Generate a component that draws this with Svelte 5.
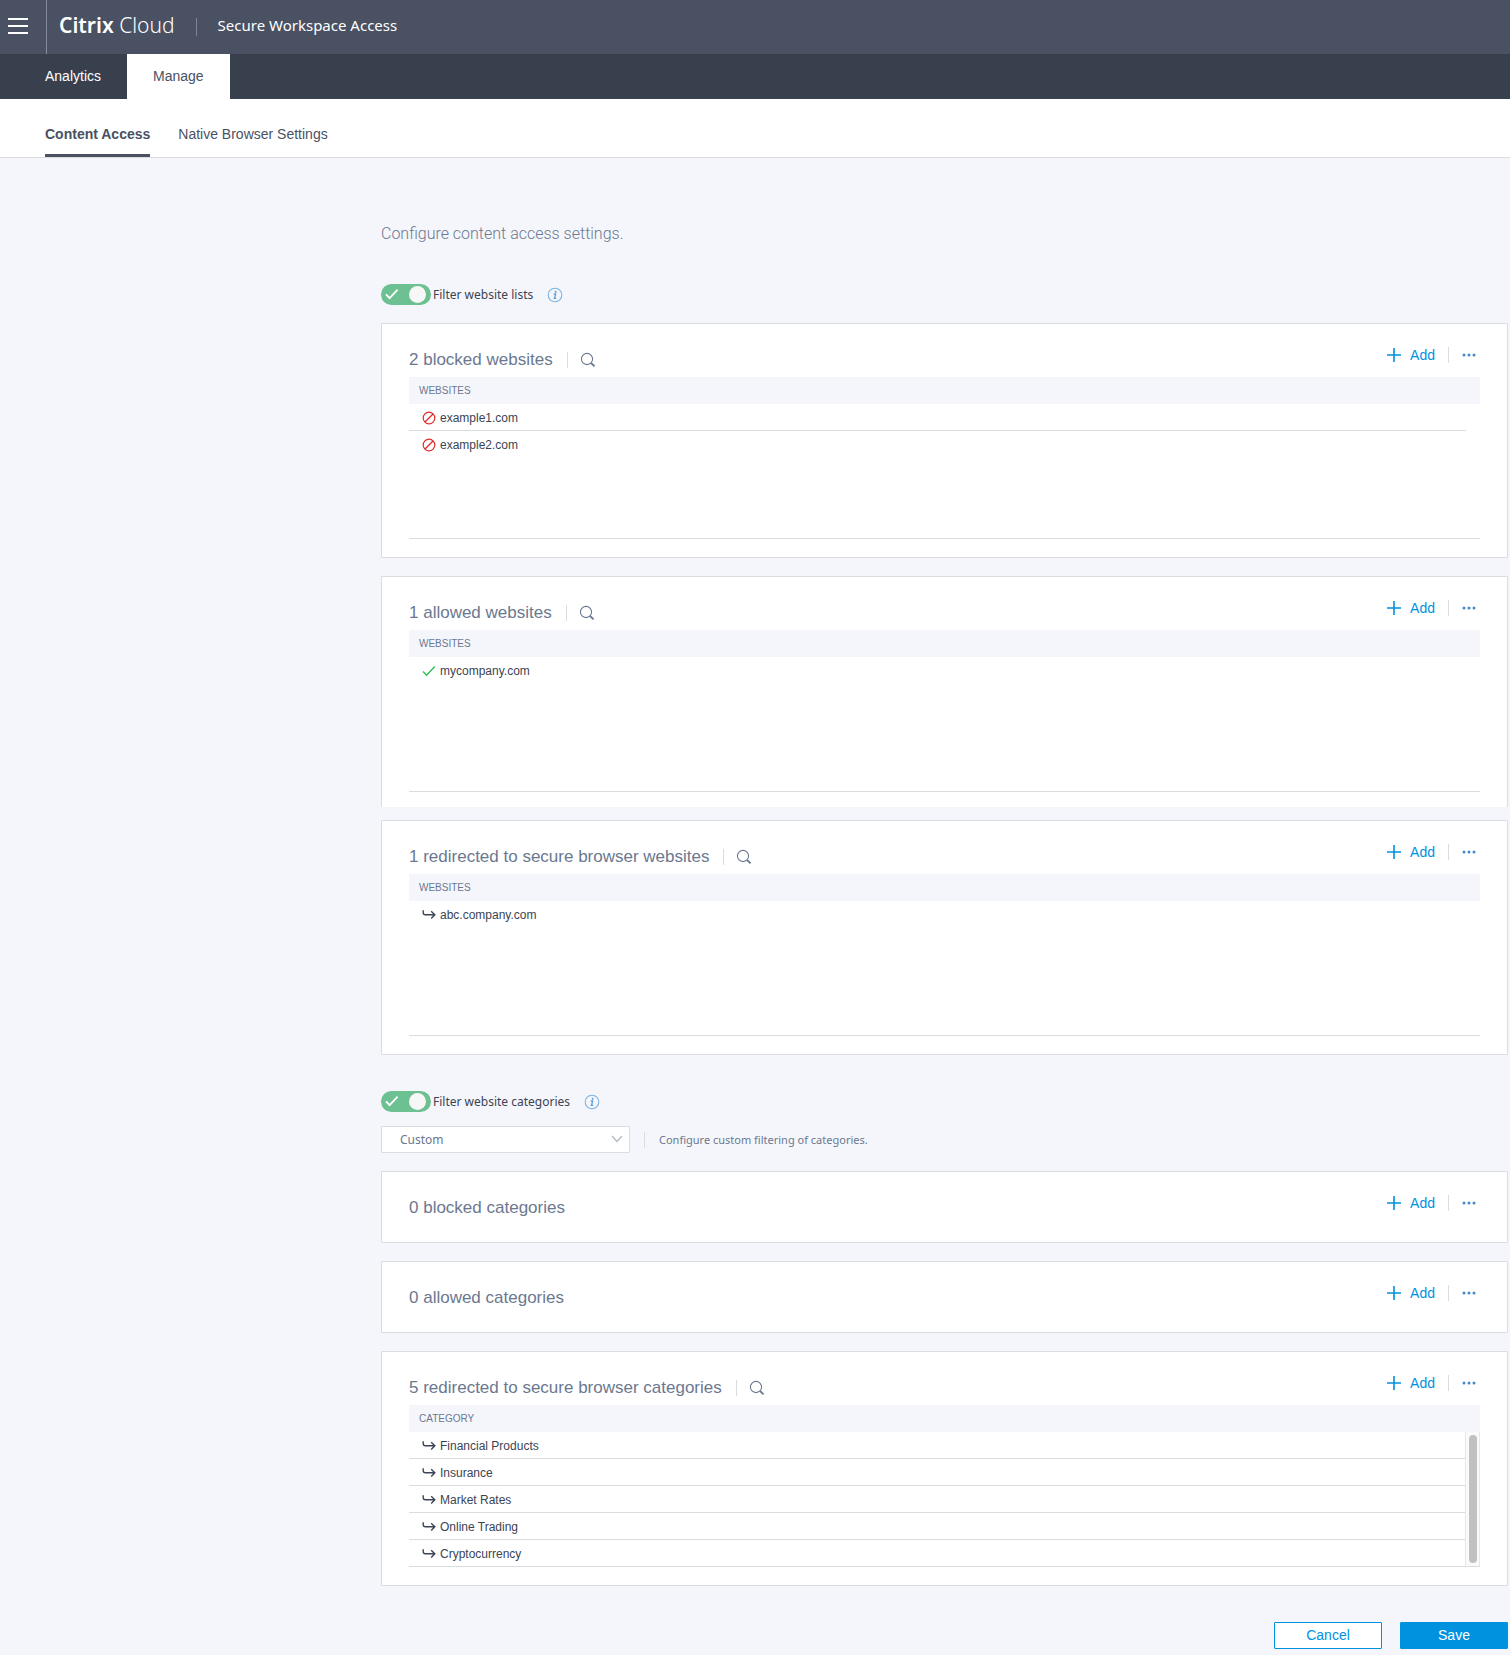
<script lang="ts">
  type Kind = 'blocked' | 'allowed' | 'redirected';

  interface Panel {
    kind: Kind;
    title: string;
    column: string;
    items: string[];
    cut?: boolean;
  }

  let filterLists = $state(true);
  let filterCategories = $state(true);
  let preset = $state('custom');

  const tabs = [
    { label: 'Analytics', active: false },
    { label: 'Manage', active: true },
  ];

  const websites: Panel[] = [
    { kind: 'blocked', title: 'blocked websites', column: 'Websites', items: ['example1.com', 'example2.com'] },
    { kind: 'allowed', title: 'allowed websites', column: 'Websites', items: ['mycompany.com'], cut: true },
    { kind: 'redirected', title: 'redirected to secure browser websites', column: 'Websites', items: ['abc.company.com'] },
  ];

  const categories: Panel[] = [
    { kind: 'blocked', title: 'blocked categories', column: 'Category', items: [] },
    { kind: 'allowed', title: 'allowed categories', column: 'Category', items: [] },
    {
      kind: 'redirected',
      title: 'redirected to secure browser categories',
      column: 'Category',
      items: ['Financial Products', 'Insurance', 'Market Rates', 'Online Trading', 'Cryptocurrency'],
    },
  ];

  const visibleRows = 4;
</script>

{#snippet kindIcon(kind: Kind)}
  <svg class="kind-icon" viewBox="0 0 14 14" width="14" height="14" fill="none" aria-hidden="true">
    {#if kind === 'blocked'}
      <circle cx="7" cy="7" r="5.8" stroke="#e02b2b" stroke-width="1.2" />
      <path d="M3 11 11 3" stroke="#e02b2b" stroke-width="1.2" />
    {:else if kind === 'allowed'}
      <path d="M1 7.6 4.6 11.2 12.8 2.6" stroke="#2fbf55" stroke-width="1.4" />
    {:else}
      <path d="M1.2 2.2V4.6Q1.2 6.8 3.4 6.8H12.6M9.2 3.2 12.8 6.8 9.2 10.4" stroke="#3b4454" stroke-width="1.4" />
    {/if}
  </svg>
{/snippet}

{#snippet infoButton(label: string)}
  <button class="info" type="button" aria-label={label}>
    <svg viewBox="0 0 16 16" width="16" height="16" fill="none" aria-hidden="true">
      <circle cx="8" cy="8" r="6.8" stroke="#7db3e2" stroke-width="1.1" />
      <circle cx="8.7" cy="4.8" r="1" fill="#5b9fd9" />
      <path d="M6.8 7H8.6L7.6 11.4H9.2M6.6 11.4H7.6" stroke="#5b9fd9" stroke-width="1.3" />
    </svg>
  </button>
{/snippet}

{#snippet switchMark()}
  <svg class="switch-mark" viewBox="0 0 14 12" width="14" height="12" fill="none" aria-hidden="true">
    <path d="M1 6.4 4.6 10.2 12.6 1.6" stroke="#fff" stroke-width="1.8" />
  </svg>
{/snippet}

{#snippet card(panel: Panel)}
  <section class="card" class:cut={panel.cut} class:empty={panel.items.length === 0}>
    <div class="card-head">
      <div class="card-title">
        <h2>{panel.items.length} {panel.title}</h2>
        {#if panel.items.length > 0}
          <span class="divider"></span>
          <button class="icon-button" type="button" aria-label="Search {panel.title}">
            <svg viewBox="0 0 16 16" width="16" height="16" fill="none" stroke="#6b7890" aria-hidden="true">
              <circle cx="7" cy="7" r="5.6" stroke-width="1.1" />
              <path d="M11 11 14.6 14.4" stroke-width="1.8" />
            </svg>
          </button>
        {/if}
      </div>
      <div class="card-actions">
        <button class="add" type="button">
          <svg viewBox="0 0 14 14" width="14" height="14" stroke="#0091df" stroke-width="1.6" aria-hidden="true">
            <path d="M7 0V14M0 7H14" />
          </svg>
          Add
        </button>
        <span class="divider"></span>
        <button class="icon-button" type="button" aria-label="More actions">
          <svg viewBox="0 0 14 14" width="14" height="14" fill="#4389c8" aria-hidden="true">
            <circle cx="2" cy="7" r="1.5" />
            <circle cx="7" cy="7" r="1.5" />
            <circle cx="12" cy="7" r="1.5" />
          </svg>
        </button>
      </div>
    </div>

    {#if panel.items.length > 0}
      <div class="list">
        <table>
          <thead>
            <tr><th scope="col">{panel.column}</th></tr>
          </thead>
          <tbody>
            {#each panel.items as item}
              <tr>
                <td>{@render kindIcon(panel.kind)}{item}</td>
              </tr>
            {/each}
          </tbody>
        </table>
        {#if panel.items.length > visibleRows}
          <div class="scroll-track"><div class="scroll-thumb"></div></div>
        {/if}
      </div>
    {/if}
  </section>
{/snippet}

<header class="topbar">
  <button class="menu" type="button" aria-label="Menu">
    <svg viewBox="0 0 20 16" width="20" height="16" stroke="#fff" stroke-width="2" aria-hidden="true">
      <path d="M0 1H20M0 8H20M0 15H20" />
    </svg>
  </button>
  <span class="brand"><strong>Citrix</strong> Cloud</span>
  <span class="brand-divider"></span>
  <span class="product">Secure Workspace Access</span>
</header>

<nav class="tabs">
  {#each tabs as tab}
    <a href="#{tab.label.toLowerCase()}" class:active={tab.active}>{tab.label}</a>
  {/each}
</nav>

<nav class="subtabs">
  <a href="#content-access" class="active">Content Access</a>
  <a href="#native-browser">Native Browser Settings</a>
</nav>

<main>
  <p class="intro">Configure content access settings.</p>

  <div class="filter-row">
    <label>
      <span class="switch">
        <input type="checkbox" bind:checked={filterLists} />
        {@render switchMark()}
      </span>
      Filter website lists
    </label>
    {@render infoButton('About website lists')}
  </div>

  {#each websites as panel}
    {@render card(panel)}
  {/each}

  <div class="filter-row categories">
    <label>
      <span class="switch">
        <input type="checkbox" bind:checked={filterCategories} />
        {@render switchMark()}
      </span>
      Filter website categories
    </label>
    {@render infoButton('About website categories')}
  </div>

  <div class="preset-row">
    <div class="select">
      <select bind:value={preset} aria-label="Category filtering">
        <option value="custom">Custom</option>
      </select>
      <svg class="chevron" viewBox="0 0 12 8" width="12" height="8" fill="none" aria-hidden="true">
        <path d="M1 1 6 6.4 11 1" stroke="#b3bac4" stroke-width="1.4" />
      </svg>
    </div>
    <span class="divider"></span>
    <span class="hint">Configure custom filtering of categories.</span>
  </div>

  {#each categories as panel}
    {@render card(panel)}
  {/each}

  <div class="footer">
    <button class="button" type="button">Cancel</button>
    <button class="button primary" type="button">Save</button>
  </div>
</main>

<style>
  :global(body) {
    margin: 0;
    background: #f5f6fb;
    color: #3b4454;
    font-family: 'Liberation Sans', Arial, sans-serif;
    font-size: 14px;
  }

  button {
    padding: 0;
    border: 0;
    background: none;
    font-family: inherit;
    cursor: pointer;
  }

  svg {
    display: block;
    flex-shrink: 0;
  }

  a {
    text-decoration: none;
  }

  .topbar {
    display: flex;
    align-items: center;
    height: 54px;
    background: #495163;
    color: #fff;
    font-family: 'Noto Sans', sans-serif;
  }

  .menu {
    align-self: stretch;
    padding: 0 18px 2px 8px;
    border-right: 1px solid #858b98;
  }

  .brand {
    margin-left: 12px;
    padding-bottom: 4px;
    font-size: 21px;
    font-weight: 300;
    line-height: 28px;
  }

  .brand strong {
    font-weight: 600;
  }

  .brand-divider {
    width: 1px;
    height: 18px;
    margin: 0 21px;
    background: #7e8593;
  }

  .product {
    padding-bottom: 4px;
    font-size: 15px;
    line-height: 24px;
  }

  .tabs {
    display: flex;
    height: 45px;
    padding-left: 19px;
    background: #39404d;
    line-height: 45px;
  }

  .tabs a {
    padding: 0 26px;
    color: #fff;
  }

  .tabs a.active {
    background: #fff;
    color: #495163;
  }

  .subtabs {
    display: flex;
    gap: 28px;
    height: 58px;
    padding-left: 45px;
    border-bottom: 1px solid #d9dce1;
    background: #fff;
    line-height: 70px;
  }

  .subtabs a {
    box-sizing: border-box;
    height: 58px;
    color: #495163;
  }

  .subtabs a.active {
    border-bottom: 3px solid #495163;
    font-weight: bold;
  }

  main {
    padding: 64px 2px 6px 381px;
  }

  .intro {
    margin: 0 0 38px;
    color: #6b7890;
    font-family: Roboto, sans-serif;
    font-size: 16px;
    font-weight: 300;
    line-height: 24px;
  }

  .filter-row {
    display: flex;
    align-items: center;
    gap: 14px;
    height: 21px;
    margin-bottom: 18px;
    font-family: 'Noto Sans', sans-serif;
    font-size: 12px;
  }

  .filter-row.categories {
    margin: 36px 0 14px;
  }

  .filter-row label {
    display: flex;
    align-items: center;
    gap: 2px;
  }

  .switch {
    position: relative;
    height: 21px;
  }

  .switch input {
    display: flex;
    align-items: center;
    width: 50px;
    height: 21px;
    margin: 0;
    border-radius: 11px;
    background: #b3bac4;
    appearance: none;
    cursor: pointer;
  }

  .switch input::before {
    content: '';
    width: 17px;
    height: 17px;
    margin-left: 4px;
    border-radius: 50%;
    background: #f7f7f7;
  }

  .switch input:checked {
    background: #6cc091;
  }

  .switch input:checked::before {
    margin-left: 28px;
  }

  .switch-mark {
    position: absolute;
    top: 4px;
    left: 4px;
    pointer-events: none;
  }

  .preset-row {
    display: flex;
    align-items: center;
    gap: 14px;
    margin-bottom: 18px;
    color: #6b7890;
    font-family: 'Noto Sans', sans-serif;
    font-size: 12px;
    line-height: 16px;
  }

  .hint {
    font-size: 11px;
  }

  .select {
    position: relative;
  }

  .select select {
    display: block;
    box-sizing: border-box;
    width: 249px;
    height: 27px;
    padding: 0 18px;
    border: 1px solid #d9dce1;
    border-radius: 1px;
    background: #fff;
    color: inherit;
    font: inherit;
    appearance: none;
  }

  .chevron {
    position: absolute;
    top: 9px;
    right: 7px;
    pointer-events: none;
  }

  .divider {
    width: 1px;
    height: 16px;
    background: #d9dce1;
  }

  .card {
    margin-bottom: 18px;
    padding: 0 27px 18px;
    border: 1px solid #d9dce1;
    border-radius: 1px;
    background: #fff;
  }

  .card.cut {
    margin-bottom: 13px;
    padding-bottom: 15px;
    border-bottom: 0;
  }

  .card.empty {
    padding-bottom: 17px;
  }

  .card-head {
    display: flex;
    justify-content: space-between;
    height: 53px;
  }

  .card-title,
  .card-actions {
    display: flex;
    align-items: center;
    height: 22px;
  }

  .card-title {
    gap: 14px;
    margin-top: 25px;
  }

  .card-title .icon-button {
    margin-left: -2px;
  }

  .card-actions {
    gap: 13px;
    margin: 20px 4px 0 0;
  }

  h2 {
    margin: 0;
    color: #6b7890;
    font-size: 17px;
    font-weight: normal;
    line-height: 22px;
  }

  .add {
    display: flex;
    align-items: center;
    gap: 9px;
    color: #0091df;
    font-size: 14px;
    line-height: 22px;
  }

  .list {
    position: relative;
  }

  table,
  thead,
  tbody,
  tr,
  th {
    display: block;
  }

  th {
    padding: 0 10px;
    background: #f5f6fb;
    color: #6b7890;
    font-size: 10px;
    font-weight: normal;
    line-height: 27px;
    text-align: left;
    text-transform: uppercase;
  }

  tbody {
    height: 134px;
    border-bottom: 1px solid #d9dce1;
  }

  tbody tr {
    margin-right: 14px;
  }

  tbody tr:not(:last-child) {
    border-bottom: 1px solid #d9dce1;
  }

  td {
    display: flex;
    align-items: center;
    gap: 4px;
    height: 26px;
    padding: 1px 0 0 13px;
    box-sizing: border-box;
    font-size: 12px;
  }

  .scroll-track {
    position: absolute;
    top: 27px;
    right: 0;
    bottom: 1px;
    box-sizing: border-box;
    width: 15px;
    padding: 3px;
    border: 1px solid #e8e8e8;
    border-width: 0 1px;
    background: #fafafa;
  }

  .scroll-thumb {
    width: 8px;
    height: 100%;
    border-radius: 4px;
    background: #c1c1c1;
  }

  .footer {
    display: flex;
    justify-content: flex-end;
    gap: 18px;
    margin-top: 36px;
  }

  .button {
    width: 108px;
    height: 27px;
    padding-bottom: 2px;
    border: 1px solid #0091df;
    border-radius: 1px;
    background: #fff;
    color: #0091df;
    font-size: 14px;
  }

  .button.primary {
    background: #0091df;
    color: #fff;
  }
</style>
